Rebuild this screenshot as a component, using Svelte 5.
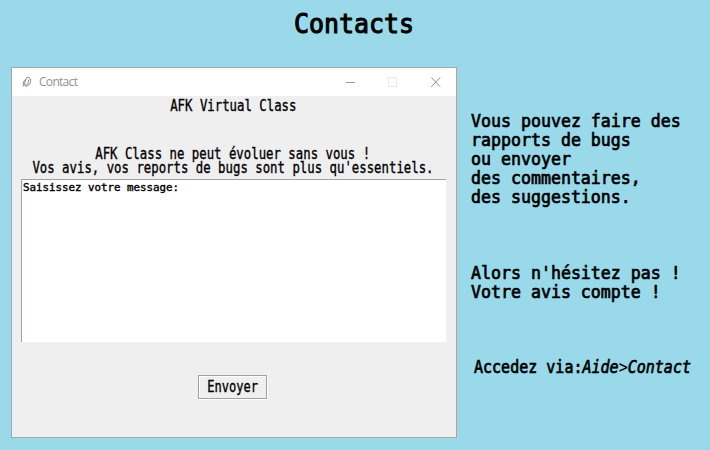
<script>
  let message = $state('Saisissez votre message:');
</script>

<main>
  <h1><span>Contacts</span></h1>
  <div class="content">
    <section class="window">
      <header>
        <svg class="feather" width="10" height="12" viewBox="0 0 10 12" fill="none" stroke="#858585" stroke-width="1">
          <path d="M.8 10.5L2.6 8.6M5.2 1.2C8.2 1 9 3.6 8.6 5.6C8 8.4 6 10.4 3.6 10C2 9.6 2.6 5 5.2 1.2M4 3.2C2 4.6 .8 6.8 1.4 9M3.6 10C5.2 8.8 6.6 6.4 6.8 3.6" />
        </svg>
        <span class="title">Contact</span>
        <svg class="controls" width="95" height="11" viewBox="0 0 95 11" fill="none">
          <path d="M0 5.5H9" stroke="#999" />
          <rect x="42.5" y=".5" width="8" height="9" stroke="#e9e9e9" />
          <path d="M85.3 .5L94.2 9.8M94.2 .5L85.3 9.8" stroke="#8b8b8b" />
        </svg>
      </header>
      <div class="body">
        <p class="small name"><span>AFK Virtual Class</span></p>
        <p class="small intro"><span>AFK Class ne peut évoluer sans vous !</span></p>
        <p class="small"><span>Vos avis, vos reports de bugs sont plus qu'essentiels.</span></p>
        <textarea bind:value={message} spellcheck="false"></textarea>
        <button><span>Envoyer</span></button>
      </div>
    </section>
    <aside>
      <p><span>Vous pouvez faire des<br />rapports de bugs<br />ou envoyer<br />des commentaires,<br />des suggestions.</span></p>
      <p class="opinion"><span>Alors n'hésitez pas !<br />Votre avis compte !</span></p>
      <p class="path"><span>Accedez via:<em>Aide<i>&gt;</i>Contact</em></span></p>
    </aside>
  </div>
</main>

<style>
  :global(body) { margin: 0; }
  main {
    width: 710px;
    height: 450px;
    overflow: hidden;
    background: #99d9ea;
    color: #000;
    font-family: "DejaVu Sans Mono", "Liberation Mono", monospace;
  }
  h1, p { margin: 0; white-space: nowrap; }
  h1 span, p span, button span { display: inline-block; }
  h1 {
    height: 67px;
    padding: 6px 1px 0 0;
    box-sizing: border-box;
    display: flex;
    justify-content: center;
    font-size: 27px;
    line-height: 36px;
    font-weight: 400;
    -webkit-text-stroke: 1.1px #000;
  }
  h1 span { height: 36px; transform: scaleX(.922); }
  .content { display: flex; padding-left: 11px; }
  .window {
    width: 446px;
    height: 371px;
    box-sizing: border-box;
    border: 1px solid #a7a7a7;
    background: #efefef;
    flex: none;
  }
  header {
    height: 28px;
    display: flex;
    align-items: center;
    background: #fff;
    padding: 0 15px 0 10px;
  }
  .title {
    margin-left: 7px;
    color: #929292;
    font: 12px/16px "Open Sans", "Noto Sans", sans-serif;
    letter-spacing: -.7px;
  }
  .controls { margin-left: auto; }
  .body {
    display: flex;
    flex-direction: column;
    align-items: flex-start;
  }
  .small {
    width: 442px;
    display: flex;
    justify-content: center;
    font-size: 15.5px;
    line-height: 14px;
    -webkit-text-stroke: .35px #000;
  }
  .small span { flex: none; transform: scaleX(.796); }
  .name { padding-top: 3px; height: 46px; }
  .name span { height: 14px; }
  .intro { padding-top: 2px; }
  textarea {
    width: 425px;
    height: 163px;
    margin: 4px 0 0 9px;
    padding: 1px 1px 0;
    box-sizing: border-box;
    border: solid #a0a0a0;
    border-width: 1px 0 0 1px;
    border-radius: 0;
    outline: 0;
    resize: none;
    overflow: hidden;
    background: #fff;
    color: #000;
    font: 10.8px/14px "DejaVu Sans Mono", monospace;
    -webkit-text-stroke: .4px #000;
  }
  button {
    width: 69px;
    height: 24px;
    margin: 33px 0 0 186px;
    padding: 0;
    display: flex;
    align-items: center;
    justify-content: center;
    border: 1px solid #a0a0a0;
    border-radius: 0;
    background: #efefef;
    box-shadow: inset 1px 1px #fff, 1px 1px #fff;
    color: #000;
    font: 15px/18px "DejaVu Sans Mono", monospace;
    -webkit-text-stroke: .35px #000;
  }
  button span { transform: scaleX(.805); }
  aside {
    padding: 45px 0 0 14px;
    font-size: 17.5px;
    line-height: 19px;
    -webkit-text-stroke: .7px #000;
  }
  aside span { transform: scaleX(.948); transform-origin: left; }
  .opinion { margin-top: 57px; }
  .path { margin: 56px 0 0 3px; }
  .path span { transform: scaleX(.858); }
  em { font-style: oblique; }
  i { -webkit-text-stroke: 0; }
</style>
